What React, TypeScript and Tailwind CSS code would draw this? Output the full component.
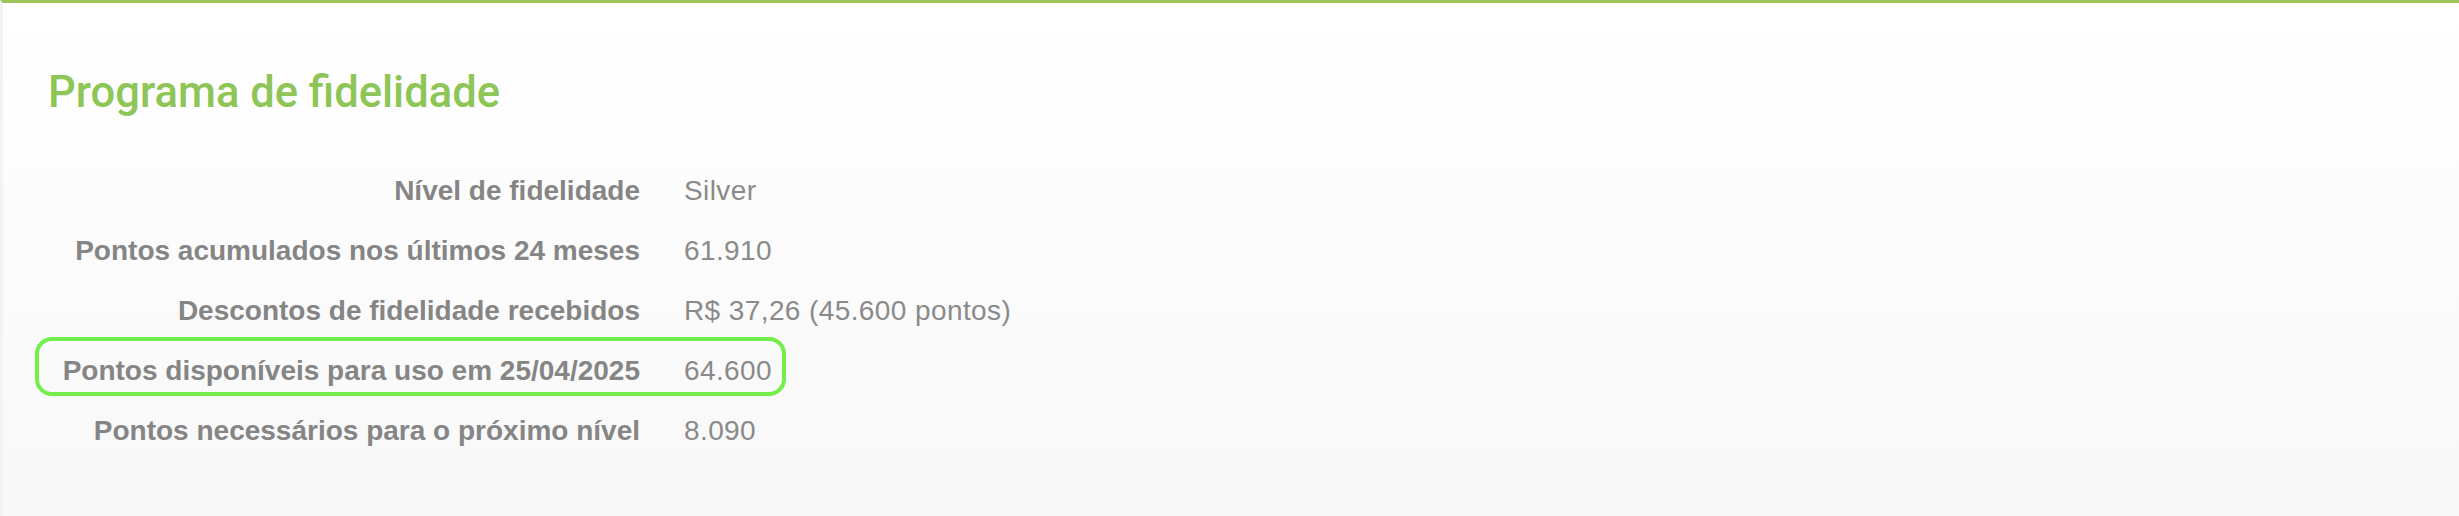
const rows = [
  { label: "Nível de fidelidade", value: "Silver" },
  { label: "Pontos acumulados nos últimos 24 meses", value: "61.910" },
  { label: "Descontos de fidelidade recebidos", value: "R$ 37,26 (45.600 pontos)" },
  { label: "Pontos disponíveis para uso em 25/04/2025", value: "64.600", highlight: true },
  { label: "Pontos necessários para o próximo nível", value: "8.090" },
];

export default function App() {
  return (
    <div className="w-[2459px] h-[516px] overflow-hidden border-t-[3px] border-[#9cc55b] border-l-[3px] border-l-[#f3f3f3] bg-gradient-to-b from-white to-[#f8f8f8]">
      <h2 className="pl-[45px] pt-[62px] text-[43.5px] leading-[56px] font-medium text-[#8dc556] font-['Roboto',sans-serif]">
        Programa de fidelidade
      </h2>
      <div className="mt-[40px] flex flex-col font-['Liberation_Sans',Arial,sans-serif]">
        {rows.map((row) => (
          <div key={row.label} className="relative grid grid-cols-[637px_1fr] gap-x-[44px] h-[60px] items-center text-[28px]">
            {row.highlight && (
              <span className="absolute left-[32px] top-[-4px] w-[751px] h-[59px] rounded-[17px] border-[4.5px] border-[#72ef4c]" />
            )}
            <div className="text-right font-bold text-[#858585]">{row.label}</div>
            <div className="text-[#8a8a8a] tracking-[0.4px]">{row.value}</div>
          </div>
        ))}
      </div>
    </div>
  );
}
